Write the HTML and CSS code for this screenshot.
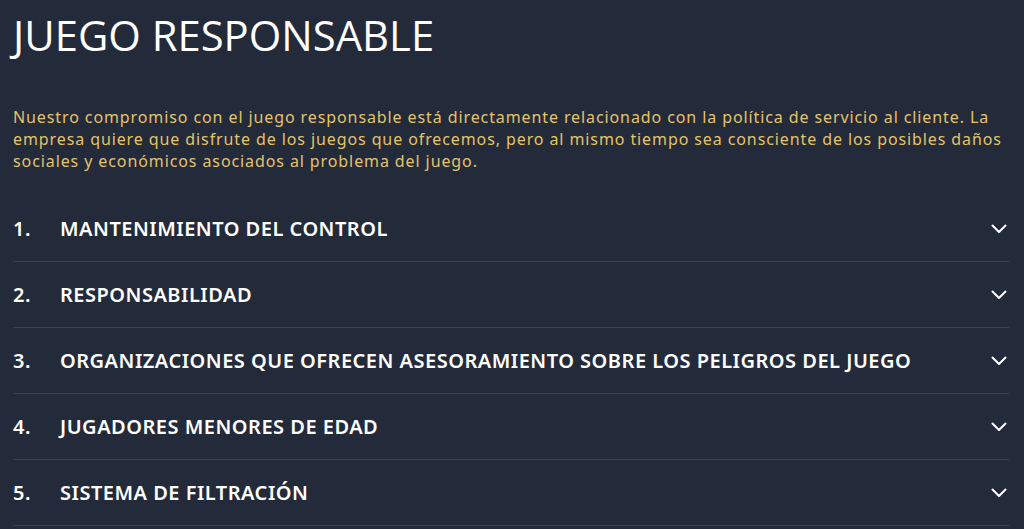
FILE: index.html
```html
<!DOCTYPE html>
<html lang="es">
<head>
<meta charset="utf-8">
<link rel="stylesheet" href="styles.css">
</head>
<body>
<main class="page">
  <h1 class="title">JUEGO RESPONSABLE</h1>
  <p class="intro">Nuestro compromiso con el juego responsable está directamente relacionado con la política de servicio al cliente. La empresa quiere que disfrute de los juegos que ofrecemos, pero al mismo tiempo sea consciente de los posibles daños sociales y económicos asociados al problema del juego.</p>
  <ul class="list">
    <li class="item"><span class="num">1.</span><span class="label">MANTENIMIENTO DEL CONTROL</span><svg class="chev" viewBox="0 0 16 10"><path d="M1.5 1.5 8 8l6.5-6.5"/></svg></li>
    <li class="item"><span class="num">2.</span><span class="label">RESPONSABILIDAD</span><svg class="chev" viewBox="0 0 16 10"><path d="M1.5 1.5 8 8l6.5-6.5"/></svg></li>
    <li class="item"><span class="num">3.</span><span class="label">ORGANIZACIONES QUE OFRECEN ASESORAMIENTO SOBRE LOS PELIGROS DEL JUEGO</span><svg class="chev" viewBox="0 0 16 10"><path d="M1.5 1.5 8 8l6.5-6.5"/></svg></li>
    <li class="item"><span class="num">4.</span><span class="label">JUGADORES MENORES DE EDAD</span><svg class="chev" viewBox="0 0 16 10"><path d="M1.5 1.5 8 8l6.5-6.5"/></svg></li>
    <li class="item"><span class="num">5.</span><span class="label">SISTEMA DE FILTRACIÓN</span><svg class="chev" viewBox="0 0 16 10"><path d="M1.5 1.5 8 8l6.5-6.5"/></svg></li>
  </ul>
</main>
</body>
</html>
```
FILE: styles.css
```css
html, body {
  margin: 0;
  padding: 0;
  background: #232a39;
}
body {
  font-family: "Noto Sans", "Open Sans", sans-serif;
  color: #ffffff;
}
.page {
  padding: 0 15px 0 13px;
}
.title {
  margin: 0;
  padding-top: 8px;
  font-family: "Open Sans", "Noto Sans", sans-serif;
  font-weight: 400;
  font-size: 41.8px;
  line-height: 54px;
  color: #ffffff;
}
.intro {
  margin: 44px 0 0;
  font-size: 16px;
  line-height: 22px;
  letter-spacing: 0.9px;
  color: #e5c36a;
}
.list {
  list-style: none;
  margin: 24px 0 0;
  padding: 0;
}
.item {
  display: flex;
  align-items: center;
  height: 65px;
  border-bottom: 1px solid #3a414e;
  font-weight: 600;
  font-size: 20px;
  letter-spacing: 0.5px;
}
.num {
  width: 47px;
}
.label {
  flex: 1;
}
.chev {
  width: 16px;
  height: 10px;
  margin-right: 2px;
  fill: none;
  stroke: #ffffff;
  stroke-width: 2;
  stroke-linecap: round;
  stroke-linejoin: round;
}
```
